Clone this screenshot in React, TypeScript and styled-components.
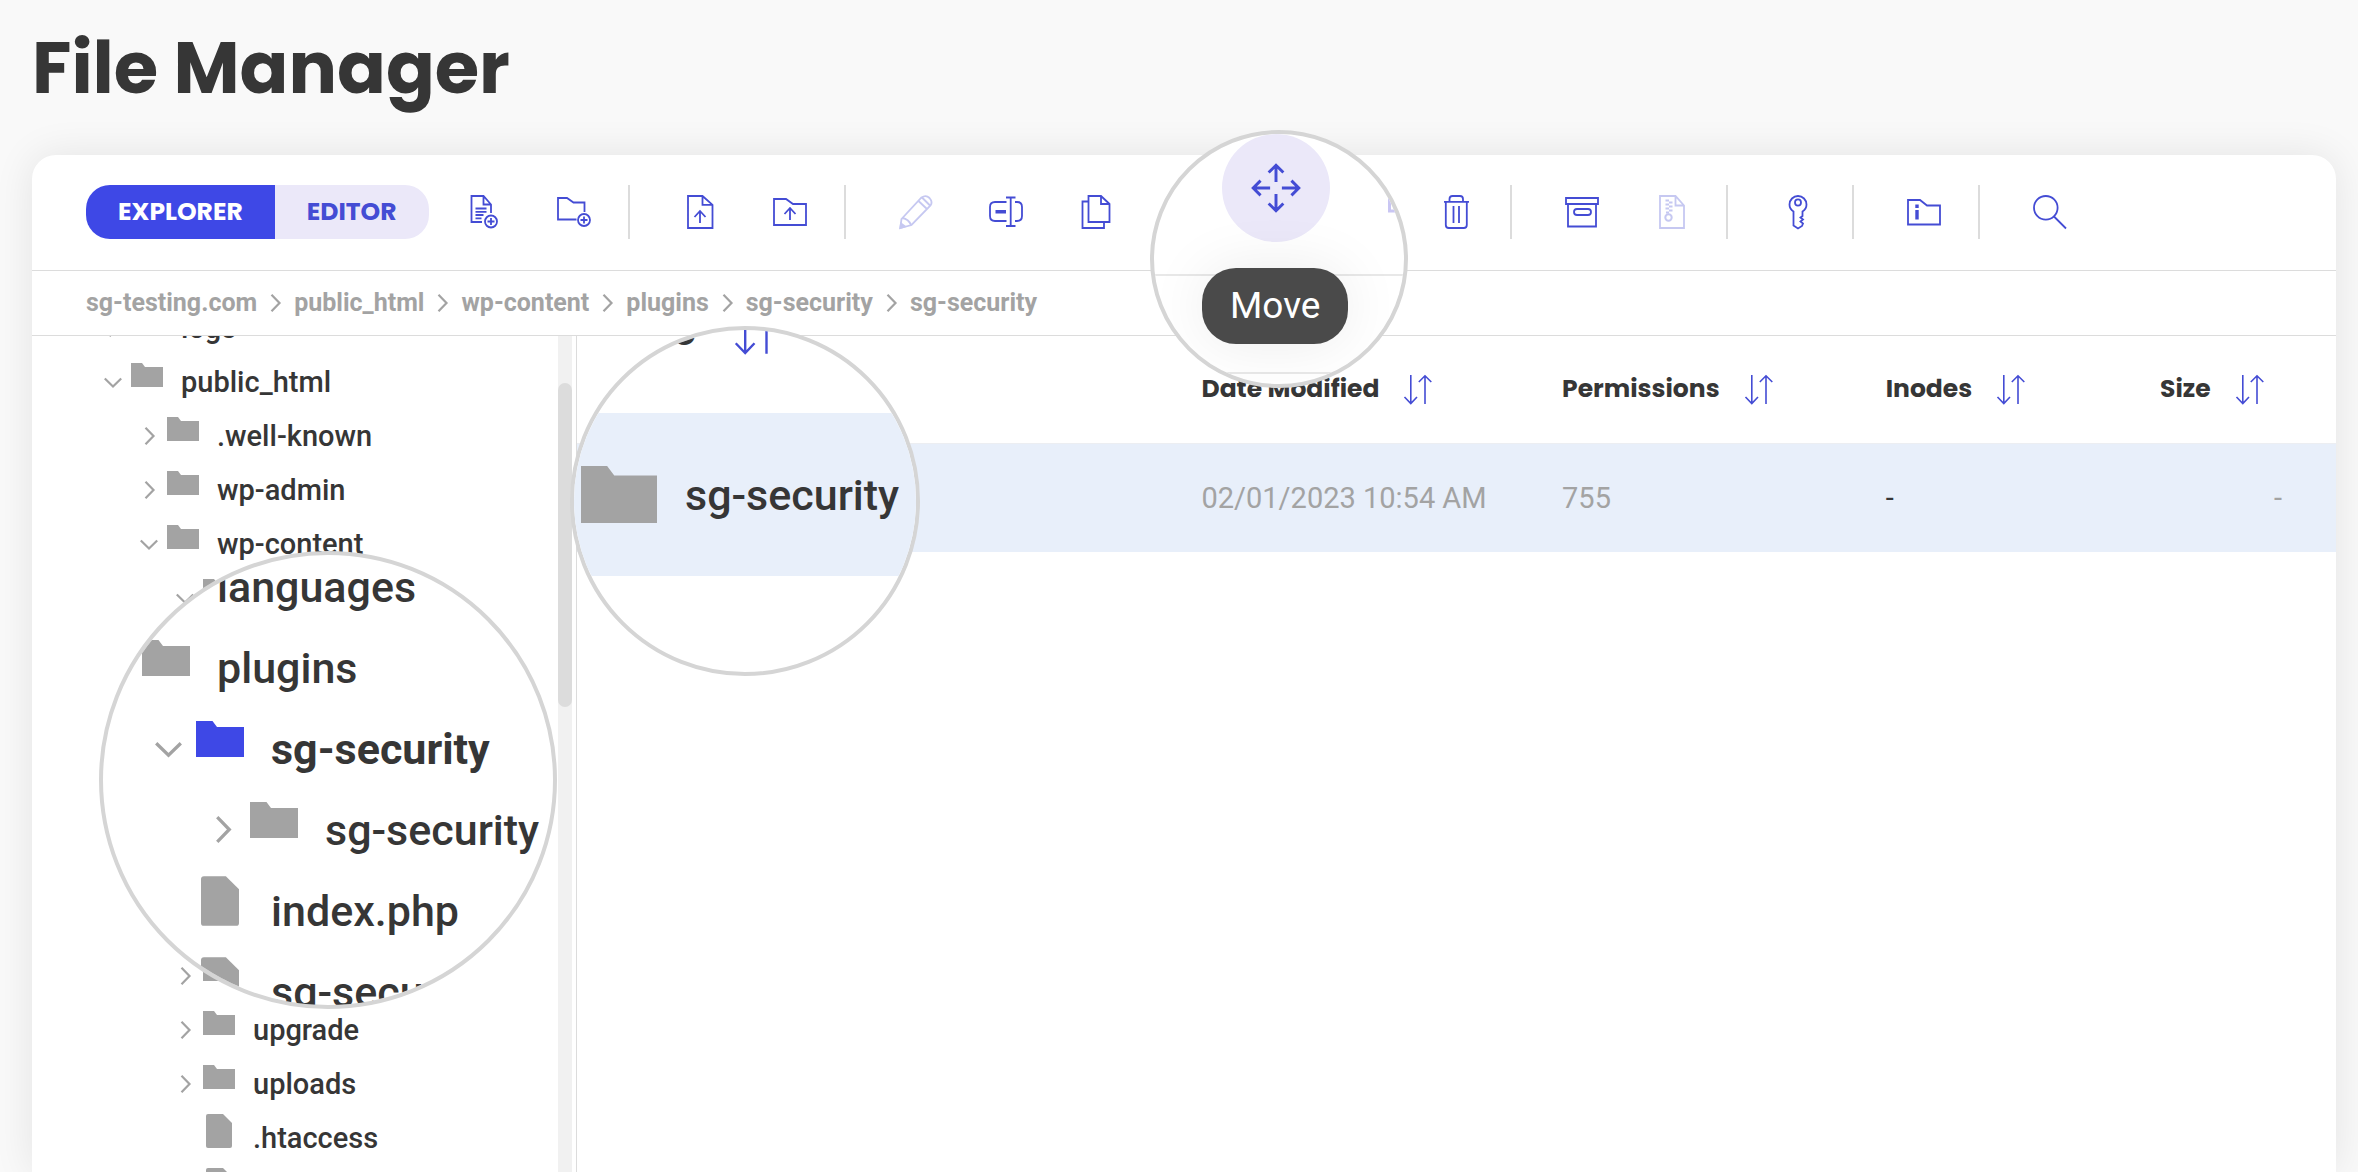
import React from "react";
import styled, { createGlobalStyle } from "styled-components";

const display = `Poppins, Inter, "Open Sans", sans-serif`;
const body = `Roboto, "Liberation Sans", sans-serif`;
const ink = "#363636";
const muted = "#a3a3a3";
const accent = "#3e48e6";
const stroke = "#444cd4";
const lilac = "#ebe8f9";
const line = "#dcdcdc";
const selected = "#e8effa";

const GlobalStyle = createGlobalStyle`
  *, *::before, *::after { box-sizing: border-box; }
  html { background: #f9f9f9; }
  body { margin: 0; font-family: ${body}; color: ${ink}; }
  button { font: inherit; color: inherit; border: 0; padding: 0; background: none; cursor: pointer; }
  svg { display: block; flex: none; overflow: visible; }
`;

const Page = styled.main`
  position: relative;
  display: flex;
  flex-direction: column;
  height: 100vh;
  padding: 0 22px 0 32px;
  overflow: hidden;
`;

const Title = styled.h1`
  margin: 0;
  padding: 32px 0 51px;
  font: 700 72px/72px ${display};
`;

const Card = styled.section`
  flex: 1;
  min-height: 0;
  display: flex;
  flex-direction: column;
  background: #fff;
  border-radius: 24px 24px 0 0;
  box-shadow: 0 0 40px rgba(0, 0, 0, 0.09);
`;

const Toolbar = styled.div`
  display: flex;
  align-items: center;
  padding: 30px 54px 31px;
  border-bottom: 1px solid ${line};
`;

const Toggle = styled.div`
  display: flex;
  height: 54px;
  border-radius: 24px;
  overflow: hidden;
`;

const ToggleButton = styled.button<{ $active?: boolean }>`
  padding: 0 32px;
  font: 700 25px/54px ${display};
  color: ${(p) => (p.$active ? "#fff" : stroke)};
  background: ${(p) => (p.$active ? accent : lilac)};
`;

const ToolGroup = styled.div<{ $first: boolean }>`
  display: flex;
  gap: 36px;
  height: 54px;
  margin-left: ${(p) => (p.$first ? 28 : 43)}px;
  padding-right: 27px;
  border-right: 2px solid ${line};

  &:last-child { border-right: 0; }
`;

const ToolButton = styled.button`
  display: grid;
  place-items: center;
  width: 54px;
  height: 54px;
  &:disabled { opacity: 0.3; cursor: default; }
`;

const Crumbs = styled.nav`
  display: flex;
  align-items: center;
  gap: 13px;
  height: 65px;
  padding: 0 54px;
  border-bottom: 1px solid ${line};
`;

const Crumb = styled.a`
  font-size: 25px;
  line-height: 32px;
  font-weight: 700;
  color: ${muted};
  text-decoration: none;
`;

const Panels = styled.div`
  flex: 1;
  min-height: 0;
  display: flex;
`;

const Sidebar = styled.aside`
  flex: none;
  display: flex;
  width: 545px;
  padding-right: 4px;
  border-right: 1px solid ${line};
  overflow: hidden;
`;

const Tree = styled.ul`
  flex: 1;
  margin: -35px 0 0;
  padding: 0 0 0 72px;
  list-style: none;
`;

const ScrollTrack = styled.div`
  width: 14px;
  padding-top: 47px;
  background: #f1f1f1;
`;

const ScrollThumb = styled.div`
  height: 324px;
  border-radius: 7px;
  background: ${line};
`;

const Row = styled.button<{ $depth: number; $large?: boolean; $bold?: boolean }>`
  display: flex;
  align-items: center;
  height: ${(p) => (p.$large ? 81 : 54)}px;
  padding-left: ${(p) => (p.$large ? 54 : 36) * p.$depth}px;
  font-size: ${(p) => (p.$large ? 43 : 29)}px;
  font-weight: ${(p) => (p.$bold ? 700 : 500)};
  white-space: nowrap;
`;

const ChevronSlot = styled.span<{ $large?: boolean }>`
  display: grid;
  place-items: center;
  width: ${(p) => (p.$large ? 27 : 18)}px;
`;

const IconSlot = styled.span<{ $large?: boolean }>`
  display: grid;
  place-items: center;
  width: ${(p) => (p.$large ? 48 : 32)}px;
  margin: 0 ${(p) => (p.$large ? 27 : 18)}px 0 ${(p) => (p.$large ? 14 : 9)}px;
  padding-bottom: ${(p) => (p.$large ? 19 : 14)}px;
`;

const Content = styled.div`
  flex: 1;
  min-width: 0;
`;

const Table = styled.table`
  width: 100%;
  table-layout: fixed;
  border-collapse: collapse;
`;

const HeadCell = styled.th<{ $width: string }>`
  width: ${(p) => p.$width};
  height: 107px;
  padding: 0;
  text-align: left;
`;

const SortButton = styled.button<{ $large?: boolean }>`
  display: flex;
  align-items: center;
  gap: ${(p) => (p.$large ? 39 : 25)}px;
  font: 700 ${(p) => (p.$large ? 38 : 25)}px/36px ${display};
`;

const Cell = styled.td<{ $dark?: boolean; $right?: boolean }>`
  height: 109px;
  padding: 0 ${(p) => (p.$right ? 54 : 0)}px 0 0;
  border-top: 1px solid #eceef2;
  background: ${selected};
  font-size: 29px;
  color: ${(p) => (p.$dark ? ink : muted)};
  text-align: ${(p) => (p.$right ? "right" : "left")};
`;

/* Round magnifier laid over the page */
const Lens = styled.div<{ $x: number; $y: number; $size: number }>`
  position: absolute;
  left: ${(p) => p.$x}px;
  top: ${(p) => p.$y}px;
  width: ${(p) => p.$size}px;
  height: ${(p) => p.$size}px;
  border: 4px solid #d5d5d5;
  border-radius: 50%;
  background: #fff;
  overflow: hidden;
`;

const LensTree = styled.div`
  display: flex;
  flex-direction: column;
  margin: -9px 0 0 -2px;
`;

const LensHead = styled.div`
  display: flex;
  align-items: center;
  height: 162px;
  margin-top: -79px;
  padding-left: 4px;
`;

const LensRow = styled.div`
  display: flex;
  align-items: center;
  gap: 28px;
  height: 163px;
  padding-left: 7px;
  background: ${selected};
  font-size: 43px;
  font-weight: 500;
  white-space: nowrap;
`;

const LensToolbar = styled.div`
  display: flex;
  justify-content: space-between;
  height: 142px;
  padding-left: 68px;
  border-bottom: 2px solid #e8e8e8;
`;

const LensCrumbs = styled.div`
  height: 98px;
  border-bottom: 2px solid #e8e8e8;
`;

const RoundButton = styled.button`
  display: grid;
  place-items: center;
  width: 108px;
  height: 108px;
  border-radius: 50%;
  background: ${lilac};
`;

const Tooltip = styled.div`
  position: absolute;
  left: 48px;
  top: 134px;
  padding: 0 28px;
  border-radius: 34px;
  background: #4a4a4a;
  box-shadow: 0 0 60px rgba(0, 0, 0, 0.08);
  color: #fff;
  font-size: 37px;
  line-height: 76px;
`;

const glyphs: Record<string, React.ReactNode> = {
  newFile: (
    <>
      <path d="M24 18V9.5L16.5 1H4.500v26H15M16.500 1v8.500H24M8.500 13.500h11M8.500 16.800h11M8.500 20h8M8.500 23.300h6" />
      <circle cx="24" cy="26.500" r="6" />
      <path d="M24 23v7M20.500 26.500h7" />
    </>
  ),
  newFolder: (
    <>
      <path d="M27.500 17V7.500H16.500L10 3H1v21.500h18.500" />
      <circle cx="27" cy="25" r="6" />
      <path d="M27 21.500v7M23.500 25h7" />
    </>
  ),
  uploadFile: <path d="M19.500 1H5v32h24.500V9.800zV9.800h10M17 28V16M11.500 22L17 16l5.500 6" />,
  uploadFolder: <path d="M1 4h12l7 5h13v21H1zM17 25V13M11.500 19l5.500-6 5.500 6" />,
  edit: (
    <>
      <path d="M2.500 24L22.500 2.500Q27-.500 30.500 3 34 7 31.500 10.500L12.500 30 1.300 33zM3.500 23q6 1 8.500 7M19.500 6l8.500 8M23 2.500l8 8" />
      <path d="M2 28.500l4 3L1.300 33z" fill={stroke} />
    </>
  ),
  rename: (
    <>
      <path d="M17.500 7H6Q1 7 1 12v9q0 5 5 5h11.500M26 7h2q5 0 5 5v9q0 5-5 5h-2M21.700 2.500V31M17 2.500h9.500M17 31h9.500" />
      <rect x="6.500" y="15" width="10.500" height="3.500" fill={stroke} stroke="none" />
    </>
  ),
  copy: <path d="M22 1H9.500v26h21V9zV9h8.500M9.500 6.500h-6V33H25v-6" />,
  cut: <path d="M12 5l12 20M24 5L12 25M12 28a4 4 0 1 1-8 0 4 4 0 0 1 8 0M32 28a4 4 0 1 1-8 0 4 4 0 0 1 8 0" />,
  move: (
    <path d="M17 13V2M12 6.500L17 1.500l5 5M17 21v11M12 27.500l5 5 5-5M13 17H2M6.500 12l-5 5 5 5M21 17h11M27.500 12l5 5-5 5" />
  ),
  paste: <path d="M5 4h24v29H5zM11 1h12v6H11z" />,
  trash: (
    <path d="M5 6.800h25M10.500 6.800V4q0-3 3-3h7.500q3 0 3 3v2.800M6.800 6.800V30q0 3 3 3h15q3 0 3-3V6.800M14.500 11v17M20 11v17" />
  ),
  archive: (
    <>
      <path d="M1 3h32v6H1zM3 9h28v22.500H3z" />
      <rect x="9" y="14" width="17" height="6" rx="3" />
    </>
  ),
  extract: (
    <>
      <path d="M20.500 1H5v32h24V10.500zv9.500H29" />
      <path d="M10.500 5.500h3.500M14 7.500h3.500M10.500 9.500h3.500M14 11.500h3.500M10.500 13.500h3.500M14 15.500h3.500M11 17.500h3" strokeWidth="2" />
      <circle cx="13.500" cy="22.500" r="3.200" strokeWidth="2" />
    </>
  ),
  key: (
    <>
      <path d="M12.500 16.500Q8.500 14 8.500 9.500a8.500 8.500 0 0 1 17 0q0 4.500-4 7V21l-2 1.500 2.500 2-2.500 2 2.500 2-1 2.500-4 2.500-4.500-3z" />
      <ellipse cx="17" cy="7.500" rx="3" ry="3.200" />
    </>
  ),
  info: (
    <>
      <path d="M1 5h12l7 5.500h13v19H1z" />
      <path d="M8.300 9.500h3.400v3.500H8.300zM8.300 15h3.400v9.500H8.300z" fill={stroke} stroke="none" />
    </>
  ),
  search: (
    <>
      <circle cx="12.800" cy="12.800" r="11.800" />
      <path d="M21 21.500L33 33.500" />
    </>
  ),
};

const Glyph = ({ name, size = 34, weight = 1.8 }: { name: string; size?: number; weight?: number }) => (
  <svg width={size} height={size} viewBox="0 0 34 34" fill="none" stroke={stroke} strokeWidth={weight} aria-hidden>
    {glyphs[name]}
  </svg>
);

const SortIcon = ({ large }: { large?: boolean }) => (
  <svg
    width={large ? 42 : 28}
    height={large ? 44 : 29}
    viewBox="0 0 28 29"
    fill="none"
    stroke={stroke}
    strokeWidth="1.6"
    aria-hidden
  >
    <path d="M6.800 0v28.500M.500 22l6.300 6.500L13 22M21 29V.800M14.800 7L21 .800 27.300 7" />
  </svg>
);

const Chevron = ({ open, large }: { open?: boolean; large?: boolean }) => (
  <svg
    width={large ? 27 : 18}
    height={large ? 27 : 18}
    viewBox="0 0 18 18"
    fill="none"
    stroke={muted}
    strokeWidth="2.200"
    aria-hidden
  >
    <path d={open ? "M.800 5.500L9 13.500l8.200-8" : "M5.500.800L13.500 9l-8 8.200"} />
  </svg>
);

const Folder = ({ width = 32, color = muted }: { width?: number; color?: string }) => (
  <svg width={width} height={width * 0.75} viewBox="0 0 32 24" aria-hidden>
    <path d="M0 0h11l3 4h18v20H0z" fill={color} />
  </svg>
);

const FileIcon = ({ large }: { large?: boolean }) => (
  <svg width={large ? 38 : 26} height={large ? 50 : 34} viewBox="0 0 26 34" aria-hidden>
    <path d="M2 0h15l9 9v23q0 2-2 2H2q-2 0-2-2V2q0-2 2-2z" fill={muted} />
  </svg>
);

type Node = { name?: string; depth: number; kind?: "file"; open?: boolean; active?: boolean };

const treeTop: Node[] = [
  { name: "logs", depth: 0 },
  { name: "public_html", depth: 0, open: true },
  { name: ".well-known", depth: 1 },
  { name: "wp-admin", depth: 1 },
  { name: "wp-content", depth: 1, open: true },
];

/* Rows that sit under the magnifier: their names are shown there */
const treeCovered: Node[] = [
  { depth: 2, open: true },
  { depth: 2 },
  { depth: 2, open: true },
  { depth: 3, open: true, active: true },
  { depth: 4 },
  { depth: 3, kind: "file" },
  { depth: 3, kind: "file" },
  { depth: 2 },
];

const treeBottom: Node[] = [
  { name: "upgrade", depth: 2 },
  { name: "uploads", depth: 2 },
  { name: ".htaccess", depth: 2, kind: "file" },
  { depth: 2, kind: "file" },
];

const magnified: Node[] = [
  { name: "languages", depth: 0 },
  { name: "plugins", depth: 0, open: true },
  { name: "sg-security", depth: 1, open: true, active: true },
  { name: "sg-security", depth: 2 },
  { name: "index.php", depth: 1, kind: "file" },
  { name: "sg-security", depth: 1, kind: "file" },
];

const TreeRow = ({ node, large }: { node: Node; large?: boolean }) => (
  <Row $depth={node.depth} $large={large} $bold={node.active}>
    <ChevronSlot $large={large}>{node.kind !== "file" && <Chevron open={node.open} large={large} />}</ChevronSlot>
    <IconSlot $large={large}>
      {node.kind === "file" ? (
        <FileIcon large={large} />
      ) : (
        <Folder width={large ? 48 : 32} color={node.active ? accent : muted} />
      )}
    </IconSlot>
    {node.name}
  </Row>
);

const groups: { icon: string; label: string; off?: boolean }[][] = [
  [
    { icon: "newFile", label: "New File" },
    { icon: "newFolder", label: "New Folder" },
  ],
  [
    { icon: "uploadFile", label: "File Upload" },
    { icon: "uploadFolder", label: "Folder Upload" },
  ],
  [
    { icon: "edit", label: "Edit", off: true },
    { icon: "rename", label: "Rename" },
    { icon: "copy", label: "Copy" },
    { icon: "cut", label: "Cut" },
    { icon: "move", label: "Move" },
    { icon: "paste", label: "Paste", off: true },
    { icon: "trash", label: "Delete" },
  ],
  [
    { icon: "archive", label: "Archive" },
    { icon: "extract", label: "Extract", off: true },
  ],
  [{ icon: "key", label: "Permissions" }],
  [{ icon: "info", label: "Folder Info" }],
  [{ icon: "search", label: "Search" }],
];

const crumbs = ["sg-testing.com", "public_html", "wp-content", "plugins", "sg-security", "sg-security"];

const columns = [
  { label: "Date Modified", width: "20.5%" },
  { label: "Permissions", width: "18.4%" },
  { label: "Inodes", width: "15.6%" },
  { label: "Size", width: "10%" },
];

export default function App() {
  return (
    <Page>
      <GlobalStyle />
      <Title>File Manager</Title>
      <Card>
        <Toolbar>
          <Toggle role="group" aria-label="View">
            <ToggleButton $active>EXPLORER</ToggleButton>
            <ToggleButton>EDITOR</ToggleButton>
          </Toggle>
          {groups.map((group, i) => (
            <ToolGroup key={i} $first={i === 0}>
              {group.map((tool) => (
                <ToolButton key={tool.icon} aria-label={tool.label} disabled={tool.off}>
                  <Glyph name={tool.icon} />
                </ToolButton>
              ))}
            </ToolGroup>
          ))}
        </Toolbar>
        <Crumbs aria-label="Path">
          {crumbs.map((crumb, i) => (
            <React.Fragment key={i}>
              {i > 0 && (
                <svg width="11" height="18" viewBox="0 0 11 18" fill="none" stroke={muted} strokeWidth="2.200" aria-hidden>
                  <path d="M1.500 .800L9.500 9l-8 8.200" />
                </svg>
              )}
              <Crumb href="#">{crumb}</Crumb>
            </React.Fragment>
          ))}
        </Crumbs>
        <Panels>
          <Sidebar>
            <Tree>
              {[...treeTop, ...treeCovered, ...treeBottom].map((node, i) => (
                <li key={i}>
                  <TreeRow node={node} />
                </li>
              ))}
            </Tree>
            <ScrollTrack>
              <ScrollThumb />
            </ScrollTrack>
          </Sidebar>
          <Content>
            <Table>
              <thead>
                <tr>
                  <HeadCell $width="35.5%" aria-label="Name" />
                  {columns.map((column) => (
                    <HeadCell key={column.label} $width={column.width}>
                      <SortButton>
                        {column.label}
                        <SortIcon />
                      </SortButton>
                    </HeadCell>
                  ))}
                </tr>
              </thead>
              <tbody>
                <tr>
                  <Cell aria-label="sg-security" />
                  <Cell>02/01/2023 10:54 AM</Cell>
                  <Cell>755</Cell>
                  <Cell $dark>-</Cell>
                  <Cell $right>-</Cell>
                </tr>
              </tbody>
            </Table>
          </Content>
        </Panels>
      </Card>

      <Lens $x={99} $y={551} $size={458}>
        <LensTree>
          {magnified.map((node, i) => (
            <TreeRow key={i} node={node} large />
          ))}
        </LensTree>
      </Lens>

      <Lens $x={570} $y={326} $size={350}>
        <LensHead>
          <SortButton $large>
            Name
            <SortIcon large />
          </SortButton>
        </LensHead>
        <LensRow>
          <Folder width={76} />
          sg-security
        </LensRow>
      </Lens>

      <Lens $x={1150} $y={130} $size={258}>
        <LensToolbar>
          <RoundButton aria-label="Move">
            <Glyph name="move" size={50} weight={2} />
          </RoundButton>
          <svg width="16" height="80" viewBox="0 0 16 80" fill="none" stroke="#c9c6f3" strokeWidth="3" aria-hidden>
            <path d="M1.500 50v27H16" />
          </svg>
        </LensToolbar>
        <LensCrumbs />
        <Tooltip role="tooltip">Move</Tooltip>
      </Lens>
    </Page>
  );
}
